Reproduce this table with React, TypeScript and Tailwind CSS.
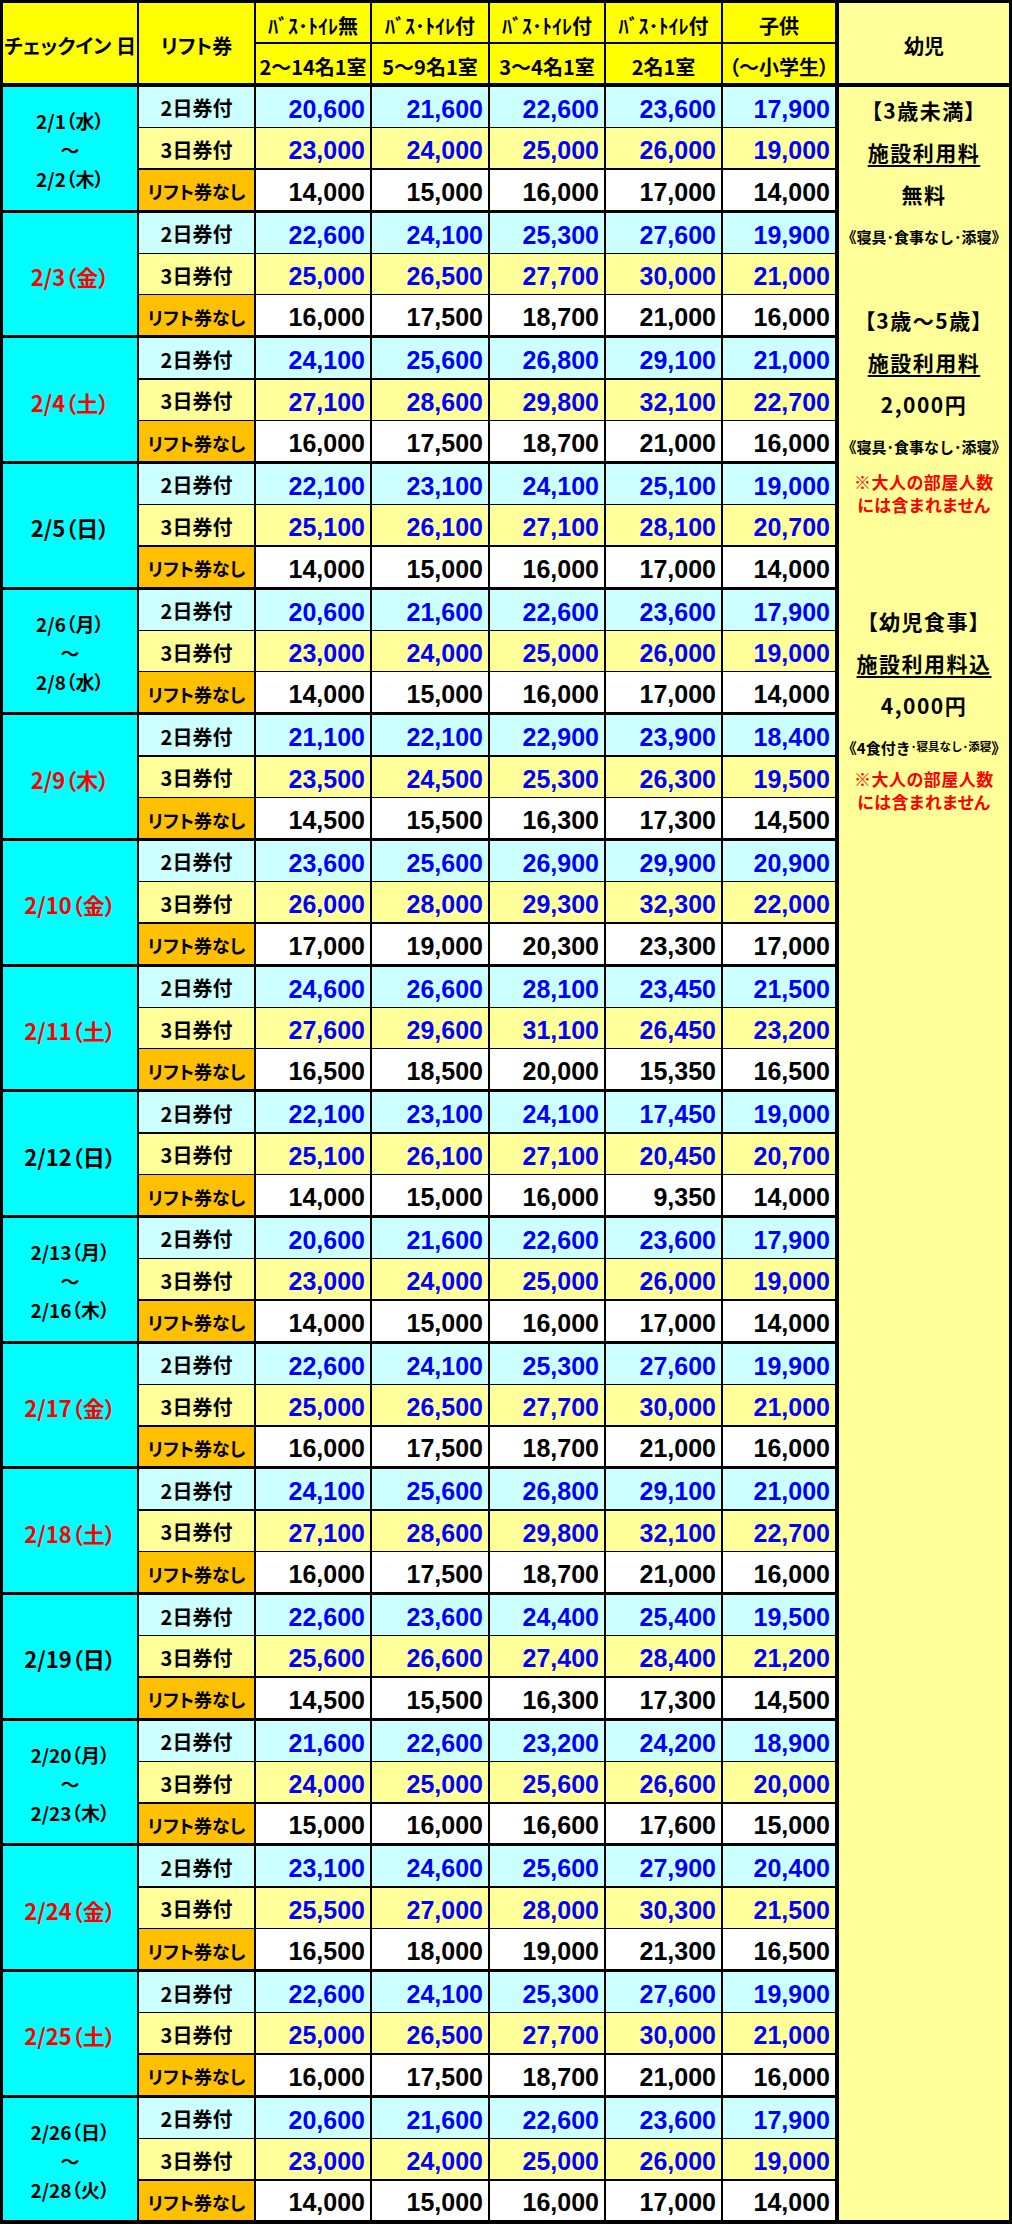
import React from 'react'

type Group = {
  date: string[]
  red?: boolean
  rows: number[][]
}

const groups: Group[] = [
  { date: ['2/1（水）', '～', '2/2（木）'], rows: [[20600, 21600, 22600, 23600, 17900], [23000, 24000, 25000, 26000, 19000], [14000, 15000, 16000, 17000, 14000]] },
  { date: ['2/3（金）'], red: true, rows: [[22600, 24100, 25300, 27600, 19900], [25000, 26500, 27700, 30000, 21000], [16000, 17500, 18700, 21000, 16000]] },
  { date: ['2/4（土）'], red: true, rows: [[24100, 25600, 26800, 29100, 21000], [27100, 28600, 29800, 32100, 22700], [16000, 17500, 18700, 21000, 16000]] },
  { date: ['2/5（日）'], rows: [[22100, 23100, 24100, 25100, 19000], [25100, 26100, 27100, 28100, 20700], [14000, 15000, 16000, 17000, 14000]] },
  { date: ['2/6（月）', '～', '2/8（水）'], rows: [[20600, 21600, 22600, 23600, 17900], [23000, 24000, 25000, 26000, 19000], [14000, 15000, 16000, 17000, 14000]] },
  { date: ['2/9（木）'], red: true, rows: [[21100, 22100, 22900, 23900, 18400], [23500, 24500, 25300, 26300, 19500], [14500, 15500, 16300, 17300, 14500]] },
  { date: ['2/10（金）'], red: true, rows: [[23600, 25600, 26900, 29900, 20900], [26000, 28000, 29300, 32300, 22000], [17000, 19000, 20300, 23300, 17000]] },
  { date: ['2/11（土）'], red: true, rows: [[24600, 26600, 28100, 23450, 21500], [27600, 29600, 31100, 26450, 23200], [16500, 18500, 20000, 15350, 16500]] },
  { date: ['2/12（日）'], rows: [[22100, 23100, 24100, 17450, 19000], [25100, 26100, 27100, 20450, 20700], [14000, 15000, 16000, 9350, 14000]] },
  { date: ['2/13（月）', '～', '2/16（木）'], rows: [[20600, 21600, 22600, 23600, 17900], [23000, 24000, 25000, 26000, 19000], [14000, 15000, 16000, 17000, 14000]] },
  { date: ['2/17（金）'], red: true, rows: [[22600, 24100, 25300, 27600, 19900], [25000, 26500, 27700, 30000, 21000], [16000, 17500, 18700, 21000, 16000]] },
  { date: ['2/18（土）'], red: true, rows: [[24100, 25600, 26800, 29100, 21000], [27100, 28600, 29800, 32100, 22700], [16000, 17500, 18700, 21000, 16000]] },
  { date: ['2/19（日）'], rows: [[22600, 23600, 24400, 25400, 19500], [25600, 26600, 27400, 28400, 21200], [14500, 15500, 16300, 17300, 14500]] },
  { date: ['2/20（月）', '～', '2/23（木）'], rows: [[21600, 22600, 23200, 24200, 18900], [24000, 25000, 25600, 26600, 20000], [15000, 16000, 16600, 17600, 15000]] },
  { date: ['2/24（金）'], red: true, rows: [[23100, 24600, 25600, 27900, 20400], [25500, 27000, 28000, 30300, 21500], [16500, 18000, 19000, 21300, 16500]] },
  { date: ['2/25（土）'], red: true, rows: [[22600, 24100, 25300, 27600, 19900], [25000, 26500, 27700, 30000, 21000], [16000, 17500, 18700, 21000, 16000]] },
  { date: ['2/26（日）', '～', '2/28（火）'], rows: [[20600, 21600, 22600, 23600, 17900], [23000, 24000, 25000, 26000, 19000], [14000, 15000, 16000, 17000, 14000]] },
]

const rowTypes = [
  { label: '2日券付', labelBg: 'bg-[#CCFFFF]', labelSize: 'text-[20px]', bg: 'bg-[#CCFFFF]', color: 'text-[#0000FF]' },
  { label: '3日券付', labelBg: 'bg-[#FFFF99]', labelSize: 'text-[20px]', bg: 'bg-[#FFFF99]', color: 'text-[#0000FF]' },
  { label: 'リフト券なし', labelBg: 'bg-[#FFC000]', labelSize: 'text-[18px]', bg: 'bg-white', color: 'text-black' },
]

const jp = "[font-family:'Noto_Sans_CJK_JP','Liberation_Sans',sans-serif] [font-feature-settings:'palt']"
const num = "[font-family:'Liberation_Sans',Arial,sans-serif]"

function HeaderCell({ children, className = '' }: { children: React.ReactNode; className?: string }) {
  return (
    <div className={`flex items-center justify-center pt-[6px] bg-[#FFFF00] text-[20px] leading-none font-bold whitespace-nowrap ${className}`}>
      {children}
    </div>
  )
}

function PriceGroup({ group }: { group: Group }) {
  const single = group.date.length === 1
  return (
    <div className="grid grid-cols-[134px_115px_114px_116px_114px_115px_112px] grid-rows-[39.9px_39.9px_39.9px] gap-x-[2px] gap-y-[1.5px]">
      <div
        className={`row-span-3 flex flex-col items-center justify-center bg-[#00FFFF] font-bold whitespace-nowrap ${
          group.red ? 'text-[#FF0000]' : 'text-black'
        } ${single ? 'text-[22px] leading-none pt-[4px]' : 'text-[19px] leading-[29px] pt-[2px]'}`}
      >
        {group.date.map((d, i) => (
          <span key={i}>{d}</span>
        ))}
      </div>
      {group.rows.map((row, r) => (
        <React.Fragment key={r}>
          <div className={`flex items-center justify-center pt-[3px] leading-none font-bold whitespace-nowrap ${rowTypes[r].labelSize} ${rowTypes[r].labelBg}`}>
            {rowTypes[r].label}
          </div>
          {row.map((v, c) => (
            <div
              key={c}
              className={`flex items-center justify-end pr-[5px] pt-[5px] text-[25px] leading-none font-bold ${num} ${rowTypes[r].bg} ${rowTypes[r].color}`}
            >
              {v.toLocaleString('en-US')}
            </div>
          ))}
        </React.Fragment>
      ))}
    </div>
  )
}

function InfantLine({ children, underline }: { children: React.ReactNode; underline?: boolean }) {
  return (
    <div className="h-[42px] flex items-center justify-center text-[21px] tracking-[1.5px] leading-none whitespace-nowrap">
      <span className={underline ? 'underline underline-offset-[4px] decoration-[1.5px]' : ''}>{children}</span>
    </div>
  )
}

function NoteLine({ children }: { children: React.ReactNode }) {
  return (
    <div className="h-[42px] flex items-center justify-center text-[15px] leading-none whitespace-nowrap [font-feature-settings:normal]">
      {children}
    </div>
  )
}

function RedNote({ className = '' }: { className?: string }) {
  return (
    <div className={`flex flex-col items-center text-[#FF0000] text-[17px] leading-[22.5px] tracking-[0.5px] whitespace-nowrap ${className}`}>
      <span>※大人の部屋人数</span>
      <span>には含まれません</span>
    </div>
  )
}

function InfantColumn() {
  return (
    <div className="w-[170px] bg-[#FFFF99] flex flex-col pt-[2px] font-bold text-black">
      <InfantLine>【3歳未満】</InfantLine>
      <InfantLine underline>施設利用料</InfantLine>
      <InfantLine>無料</InfantLine>
      <NoteLine>《寝具･食事なし･添寝》</NoteLine>
      <div className="h-[42px]" />
      <InfantLine>【3歳～5歳】</InfantLine>
      <InfantLine underline>施設利用料</InfantLine>
      <InfantLine>2,000円</InfantLine>
      <NoteLine>《寝具･食事なし･添寝》</NoteLine>
      <RedNote className="h-[48px] pt-[4px]" />
      <div className="h-[85px]" />
      <InfantLine>【幼児食事】</InfantLine>
      <InfantLine underline>施設利用料込</InfantLine>
      <InfantLine>4,000円</InfantLine>
      <div className="h-[42px] flex items-center justify-center leading-none whitespace-nowrap [font-feature-settings:normal]">
        <span className="text-[15px]">《4食付き</span>
        <span className="text-[11.5px]">･寝具なし･添寝</span>
        <span className="text-[15px]">》</span>
      </div>
      <RedNote />
    </div>
  )
}

export default function App() {
  return (
    <div className={`min-h-screen bg-white ${jp}`}>
      <div className="w-[1012px] bg-black pt-[3px] pl-[3px] pr-[3px] pb-[4px] flex flex-col gap-[4px] text-black">
        <div className="flex gap-[4px] h-[80px]">
          <div className="grid grid-cols-[134px_115px_114px_116px_114px_115px_112px] grid-rows-[39px_39px] gap-x-[2px] gap-y-[2px]">
            <HeaderCell className="row-span-2">チェックイン 日</HeaderCell>
            <HeaderCell className="row-span-2">リフト券</HeaderCell>
            <HeaderCell>ﾊﾞｽ･ﾄｲﾚ無</HeaderCell>
            <HeaderCell>ﾊﾞｽ･ﾄｲﾚ付</HeaderCell>
            <HeaderCell>ﾊﾞｽ･ﾄｲﾚ付</HeaderCell>
            <HeaderCell>ﾊﾞｽ･ﾄｲﾚ付</HeaderCell>
            <HeaderCell>子供</HeaderCell>
            <HeaderCell>2～14名1室</HeaderCell>
            <HeaderCell>5～9名1室</HeaderCell>
            <HeaderCell>3～4名1室</HeaderCell>
            <HeaderCell>2名1室</HeaderCell>
            <HeaderCell>（～小学生）</HeaderCell>
          </div>
          <HeaderCell className="w-[170px] bg-[#FFFF99]">幼児</HeaderCell>
        </div>
        <div className="flex gap-[4px]">
          <div className="flex flex-col gap-[3px]">
            {groups.map((g, i) => (
              <PriceGroup key={i} group={g} />
            ))}
          </div>
          <InfantColumn />
        </div>
      </div>
    </div>
  )
}
